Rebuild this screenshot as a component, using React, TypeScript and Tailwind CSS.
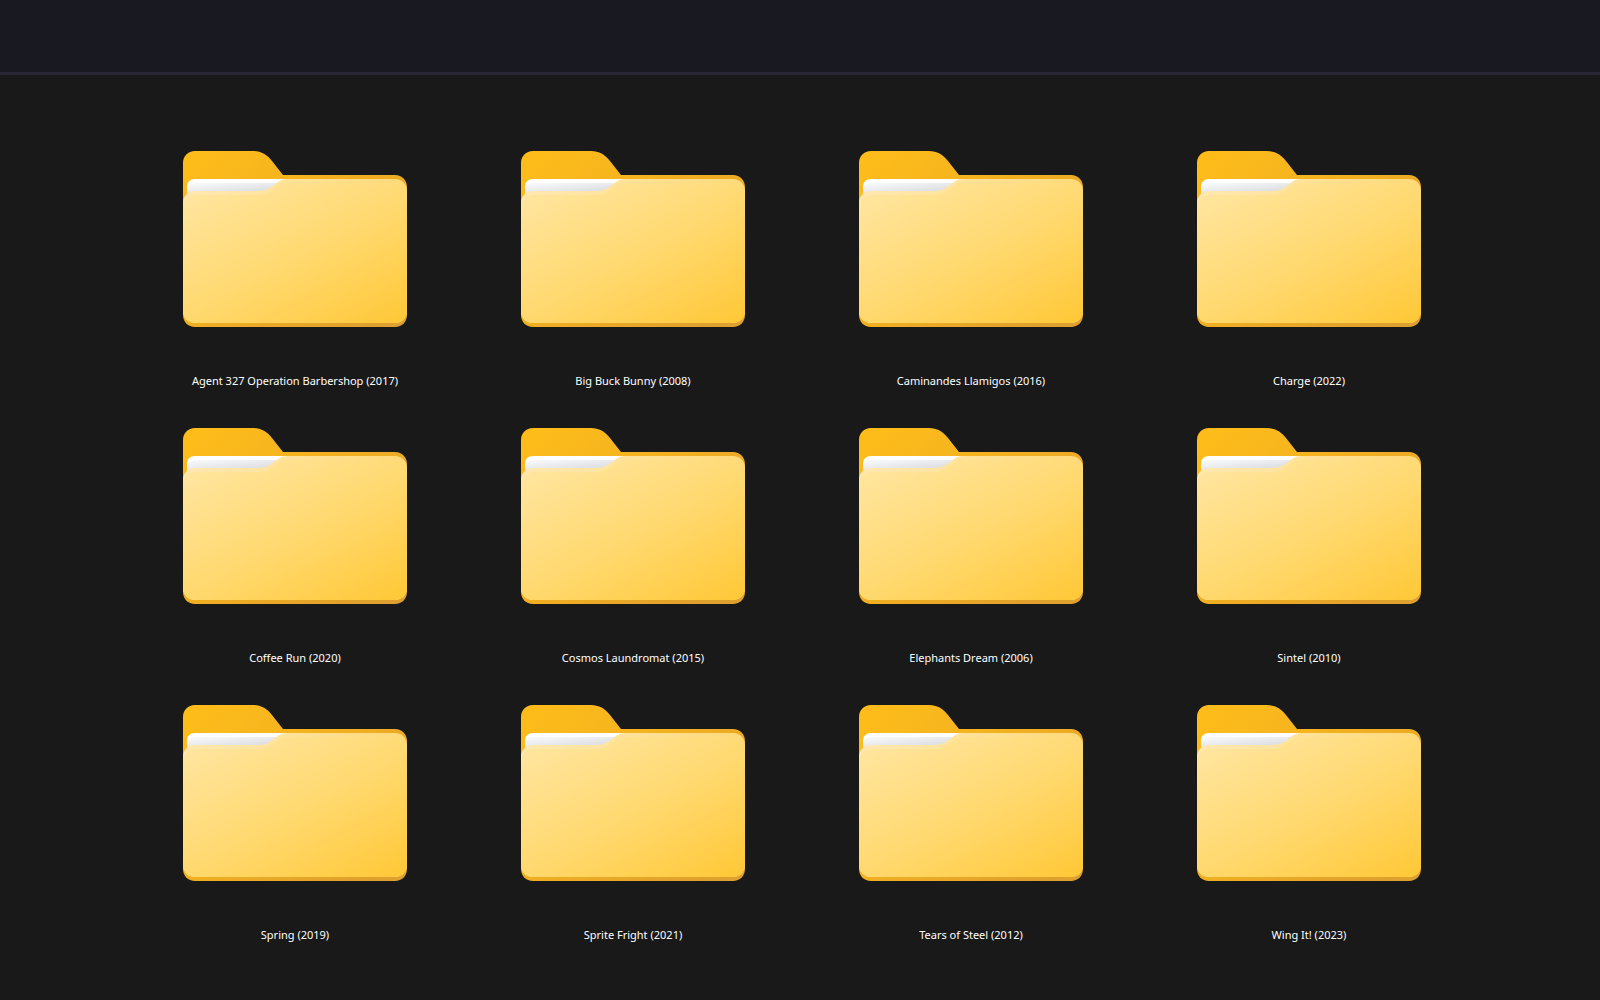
const folders = [
  "Agent 327 Operation Barbershop (2017)",
  "Big Buck Bunny (2008)",
  "Caminandes Llamigos (2016)",
  "Charge (2022)",
  "Coffee Run (2020)",
  "Cosmos Laundromat (2015)",
  "Elephants Dream (2006)",
  "Sintel (2010)",
  "Spring (2019)",
  "Sprite Fright (2021)",
  "Tears of Steel (2012)",
  "Wing It! (2023)",
];

const FRONT =
  "M0 52C0 45 5 40 12 40H75C82 40 87 37 91 34C95 31 98 28 104 28H212C219 28 224 33 224 40V160C224 167 219 172 212 172H12C5 172 0 167 0 160Z";

// Gradients and the clip are shared by every folder, so they are declared once.
function FolderDefs() {
  return (
    <svg className="absolute size-0" aria-hidden="true">
      <defs>
        <linearGradient id="back" gradientUnits="userSpaceOnUse" x1="30" y1="0" x2="190" y2="176">
          <stop offset="0" stopColor="#fdbc1a" />
          <stop offset="0.5" stopColor="#f0ae22" />
          <stop offset="1" stopColor="#dea02e" />
        </linearGradient>
        <linearGradient id="front" gradientUnits="userSpaceOnUse" x1="36" y1="24" x2="136" y2="212">
          <stop offset="0" stopColor="#ffe59e" />
          <stop offset="0.5" stopColor="#ffd970" />
          <stop offset="1" stopColor="#ffc837" />
        </linearGradient>
        <linearGradient id="edge" gradientUnits="userSpaceOnUse" x1="0" y1="0" x2="224" y2="0">
          <stop offset="0" stopColor="#ffe8b0" />
          <stop offset="0.4" stopColor="#ffe4a0" />
          <stop offset="1" stopColor="#ffd977" />
        </linearGradient>
        <linearGradient id="paper" gradientUnits="userSpaceOnUse" x1="50" y1="30" x2="51" y2="41">
          <stop offset="0" stopColor="#f6f7f9" />
          <stop offset="1" stopColor="#dfe1e4" />
        </linearGradient>
        <clipPath id="front-clip">
          <path d={FRONT} />
        </clipPath>
      </defs>
    </svg>
  );
}

function FolderIcon() {
  return (
    <svg width="224" height="176" viewBox="0 0 224 176" aria-hidden="true">
      <path
        d="M0 12C0 5 5 0 12 0H70C78 0 84 3.5 89 10L100 24H212C219 24 224 29 224 36V164C224 171 219 176 212 176H12C5 176 0 171 0 164Z"
        fill="url(#back)"
      />
      <path d="M4 50V36C4 31 7 28 12 28H106L90 50Z" fill="#ffffff" />
      <path d="M4 50V40C4 35 7 32 12 32H95L88 50Z" fill="url(#paper)" />
      <path d={FRONT} fill="url(#edge)" />
      <g clipPath="url(#front-clip)">
        <path d={FRONT} transform="translate(0 4)" fill="url(#front)" />
      </g>
    </svg>
  );
}

export default function App() {
  return (
    <div className="min-h-screen bg-[#191919] font-['Noto_Sans','Open_Sans',sans-serif] text-white">
      <FolderDefs />
      <header className="h-[75px] border-b-3 border-[#282534] bg-[#191922]" />
      <main className="pt-[76px] pr-[122px] pb-10 pl-[126px]">
        <ul className="grid grid-cols-4 gap-y-[37px]">
          {folders.map((name) => (
            <li key={name} className="flex justify-center">
              <a href="#" className="flex flex-col items-center gap-11">
                <FolderIcon />
                <span className="text-[11px] leading-5 whitespace-nowrap">{name}</span>
              </a>
            </li>
          ))}
        </ul>
      </main>
    </div>
  );
}
